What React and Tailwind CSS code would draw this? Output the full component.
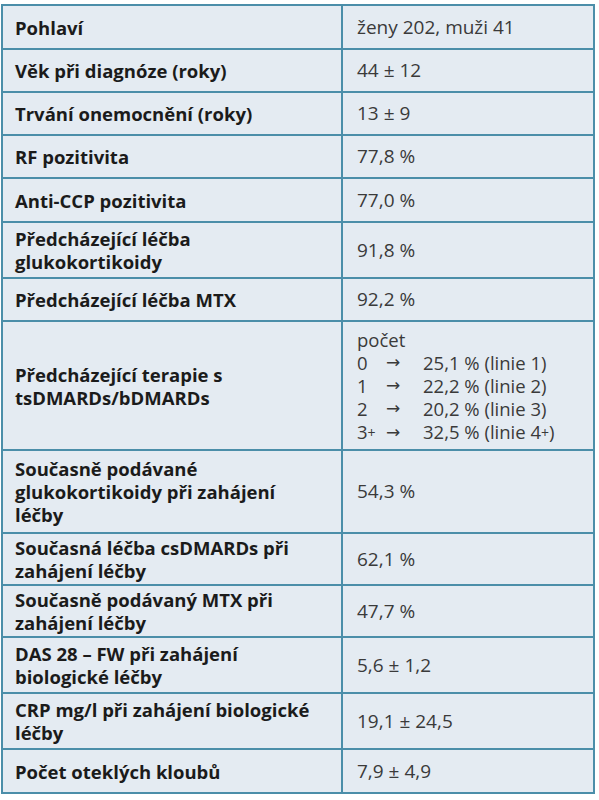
import React from 'react';

const rows = [
  { label: ['Pohlaví'], value: 'ženy 202, muži 41', h: 44 },
  { label: ['Věk při diagnóze (roky)'], value: '44 ± 12', h: 43 },
  { label: ['Trvání onemocnění (roky)'], value: '13 ± 9', h: 43 },
  { label: ['RF pozitivita'], value: '77,8 %', h: 43 },
  { label: ['Anti-CCP pozitivita'], value: '77,0 %', h: 44 },
  { label: ['Předcházející léčba', 'glukokortikoidy'], value: '91,8 %', h: 56 },
  { label: ['Předcházející léčba MTX'], value: '92,2 %', h: 43 },
  { label: ['Předcházející terapie s', 'tsDMARDs/bDMARDs'], value: 'lines', h: 129 },
  { label: ['Současně podávané', 'glukokortikoidy při zahájení', 'léčby'], value: '54,3 %', h: 83 },
  { label: ['Současná léčba csDMARDs při', 'zahájení léčby'], value: '62,1 %', h: 52 },
  { label: ['Současně podávaný MTX při', 'zahájení léčby'], value: '47,7 %', h: 52 },
  { label: ['DAS 28 – FW při zahájení', 'biologické léčby'], value: '5,6 ± 1,2', h: 56 },
  { label: ['CRP mg/l při zahájení biologické', 'léčby'], value: '19,1 ± 24,5', h: 56 },
  { label: ['Počet oteklých kloubů'], value: '7,9 ± 4,9', h: 44 },
];

const lines = [
  ['0', '25,1 % (linie 1)'],
  ['1', '22,2 % (linie 2)'],
  ['2', '20,2 % (linie 3)'],
  ['3+', '32,5 % (linie 4+)'],
];

// the source font draws "+" smaller than the digits
const Small = ({ text }) => {
  const parts = text.split('+');
  return (
    <>
      {parts.map((p, i) => (
        <React.Fragment key={i}>
          {p}
          {i < parts.length - 1 && <span className="text-[14px] align-[1px]">+</span>}
        </React.Fragment>
      ))}
    </>
  );
};

const App = () => {
  return (
    <div className="bg-white w-[599px] h-[800px] pt-[4px] pl-[1px]" style={{ fontFamily: '"Open Sans", "Noto Sans", sans-serif' }}>
      <table className="border-collapse w-[594px] bg-[#e4ebf2]">
        <tbody>
          {rows.map((r) => (
            <tr key={r.label[0]}>
              <td
                className="w-[340px] border-2 border-[#4b8ea9] pl-3 pr-2 font-bold text-[18.5px] leading-[23px] text-[#1b1b1b] align-middle whitespace-nowrap"
                style={{ height: r.h }}
              >
                {r.label.map((l) => (
                  <div key={l}>{l}</div>
                ))}
              </td>
              <td className="border-2 border-[#4b8ea9] px-[14px] text-[19px] leading-[23px] text-[#3a3a3a] align-middle whitespace-nowrap">
                {r.value === 'lines' ? (
                  <div className="text-[18.5px] leading-[23px]">
                    <div>počet</div>
                    {lines.map(([n, v]) => (
                      <div key={n} className="flex items-center">
                        <span className="w-[29px]"><Small text={n} /></span>
                        <span className="w-[37px] text-[17px] leading-[20px]" style={{ fontFamily: '"DejaVu Sans", sans-serif' }}>→</span>
                        <span><Small text={v} /></span>
                      </div>
                    ))}
                  </div>
                ) : (
                  r.value
                )}
              </td>
            </tr>
          ))}
        </tbody>
      </table>
    </div>
  );
};

export default App;
